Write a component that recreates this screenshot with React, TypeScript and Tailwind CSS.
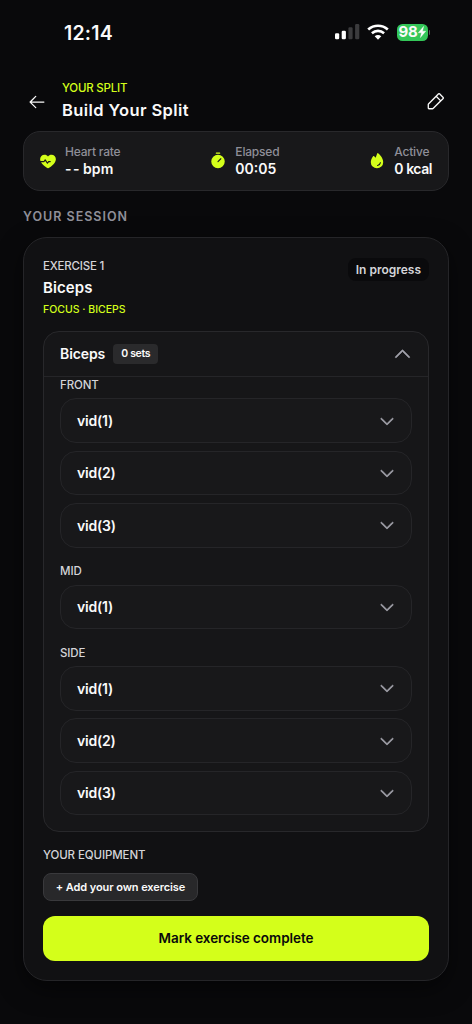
import {
  PiArrowLeft,
  PiCaretDown,
  PiCaretUp,
  PiFireFill,
  PiHeartbeatFill,
  PiPencilSimple,
  PiTimerFill,
} from "react-icons/pi"
import type { IconType } from "react-icons"

interface Stat {
  label: string
  dashes?: string
  value: string
  icon: IconType
  valueClass: string
}

interface Group {
  name: string
  videos: string[]
}

const stats: Stat[] = [
  { label: "Heart rate", dashes: "--", value: "bpm", icon: PiHeartbeatFill, valueClass: "tracking-[0.1px]" },
  { label: "Elapsed", value: "00:05", icon: PiTimerFill, valueClass: "" },
  { label: "Active", value: "0 kcal", icon: PiFireFill, valueClass: "tracking-[-0.45px]" },
]

const groups: Group[] = [
  { name: "FRONT", videos: ["vid(1)", "vid(2)", "vid(3)"] },
  { name: "MID", videos: ["vid(1)"] },
  { name: "SIDE", videos: ["vid(1)", "vid(2)", "vid(3)"] },
]

function StatusBar() {
  return (
    <div className="flex h-[64px] items-center justify-between pl-[64px] pr-[42px]">
      <span className="mt-[1px] text-[19.5px] leading-6 font-semibold tracking-[0.2px]">12:14</span>
      <div className="flex items-center">
        <svg width="25" height="16" viewBox="0 0 25 16">
          <rect x="0" y="9.2" width="4.2" height="6" rx="1.2" fill="#fff" />
          <rect x="6.7" y="6.7" width="4.2" height="8.5" rx="1.2" fill="#fff" />
          <rect x="13.4" y="3.3" width="4.2" height="11.9" rx="1.2" fill="#3b3b3d" />
          <rect x="20.1" y="0" width="4.2" height="15.2" rx="1.2" fill="#3b3b3d" />
        </svg>
        <svg className="ml-[7px]" width="22" height="16" viewBox="0 0 22 16">
          <path d="M1.2 5.5C6.8.5 15.2.5 20.8 5.5" fill="none" stroke="#fff" strokeWidth="2.7" />
          <path d="M4.9 9.3c3.6-3.2 8.6-3.2 12.2 0" fill="none" stroke="#fff" strokeWidth="2.6" />
          <path d="M11 15.7 7.7 12.2c1.9-1.6 4.7-1.6 6.6 0z" fill="#fff" />
        </svg>
        <div className="ml-[8px] flex h-[17px] w-[31px] items-center justify-center rounded-[5.5px] bg-[#34c759]">
          <span className="text-[15px] leading-4 font-bold tracking-[-0.2px]">98</span>
          <svg className="shrink-0" width="8" height="12" viewBox="0 0 8 12">
            <path d="M5.6.4.3 6.8h3.2L2.4 11.6 7.7 5.2H4.5z" fill="#fff" stroke="#fff" strokeWidth="0.4" />
          </svg>
        </div>
        <div className="ml-[1px] h-[5px] w-[1.5px] rounded-r bg-[#55555a]" />
      </div>
    </div>
  )
}

function Header() {
  return (
    <div className="flex items-center justify-between pt-[14px] pr-[26px] pl-[27px]">
      <div className="flex items-center">
        <PiArrowLeft className="mt-[3px] size-5" />
        <div className="ml-[15px]">
          <p className="text-[11.5px] leading-5 font-medium tracking-[-0.22px] text-[#d4ff1a]">YOUR SPLIT</p>
          <h1 className="text-[16.5px] leading-6 font-semibold tracking-[0.4px]">Build Your Split</h1>
        </div>
      </div>
      <PiPencilSimple className="mt-[3px] size-[21px]" />
    </div>
  )
}

function VideoRow({ name }: { name: string }) {
  return (
    <button className="flex h-[44.6px] w-full items-center justify-between rounded-[16px] border border-[#252528] bg-[#18181a] pr-[15px] pl-4">
      <span className="mt-[1px] text-[14px] leading-5 font-semibold tracking-[-0.2px]">{name}</span>
      <PiCaretDown className="size-[18px] text-[#a1a1aa]" strokeWidth={10} />
    </button>
  )
}

export default function App() {
  return (
    <div className="h-[1024px] w-[472px] overflow-hidden bg-[#09090b] font-['Inter',sans-serif] text-[#fafafa]">
      <StatusBar />
      <Header />

      <div className="mx-[23px] mt-[9px] flex h-[60px] items-center justify-between rounded-[17px] border border-[#28282b] bg-[#18181a] pr-4 pl-[15px]">
        {stats.map((s) => (
          <div key={s.label} className="flex items-center gap-2">
            <s.icon className="size-[18px] text-[#d4ff1a]" />
            <div className="-mt-[1px]">
              <p className="text-[12px] leading-[17px] font-medium tracking-[-0.2px] text-[#8f8f98]">{s.label}</p>
              <p className={`text-[14px] leading-[18px] font-semibold ${s.valueClass}`}>
                {s.dashes && <span className="mr-[2px] tracking-[1.5px]">{s.dashes}</span>}
                {s.value}
              </p>
            </div>
          </div>
        ))}
      </div>

      <h2 className="mt-4 ml-[23px] text-[12.5px] leading-5 font-semibold tracking-[1px] text-[#8f8f98]">YOUR SESSION</h2>

      <div className="mx-[23px] mt-[10px] h-[744px] rounded-[24px] border border-[#252528] bg-[#111113] px-[19px] pt-[18px] shadow-[0_8px_24px_rgba(0,0,0,0.5)]">
        <div className="flex items-start justify-between">
          <div>
            <p className="text-[11.5px] leading-5 font-medium tracking-[-0.2px] text-[#d4d4d8]">EXERCISE 1</p>
            <h3 className="text-[15px] leading-6 font-semibold tracking-[0.1px]">Biceps</h3>
            <p className="text-[10.5px] leading-5 font-medium text-[#d4ff1a]">FOCUS · BICEPS</p>
          </div>
          <span className="mt-[2px] flex h-[23px] items-center rounded-[8px] bg-[#0a0a0c] px-2 text-[12px] font-semibold text-[#d4d4d8]">
            In progress
          </span>
        </div>

        <div className="mt-[11px] h-[501px] rounded-[16px] border border-[#28282b] bg-[#161618]">
          <div className="flex h-[45px] items-center justify-between border-b border-[#252528] pr-[15px] pl-4">
            <div className="flex items-center gap-2">
              <span className="text-[14px] leading-5 font-semibold tracking-[-0.1px]">Biceps</span>
              <span className="flex h-5 items-center rounded-[4px] bg-[#2a2a2c] px-2 text-[10.5px] font-semibold tracking-[-0.3px]">0 sets</span>
            </div>
            <PiCaretUp className="size-[21px] text-[#a1a1aa]" strokeWidth={8} />
          </div>
          <div className="flex flex-col gap-[15.6px] px-4">
            {groups.map((g) => (
              <div key={g.name}>
                <p className="mb-[5.4px] text-[11.5px] leading-4 font-medium tracking-[-0.1px] text-[#d4d4d8]">{g.name}</p>
                <div className="flex flex-col gap-[7.7px]">
                  {g.videos.map((v) => (
                    <VideoRow key={v} name={v} />
                  ))}
                </div>
              </div>
            ))}
          </div>
        </div>

        <p className="mt-[13px] text-[11.5px] leading-5 font-medium tracking-[-0.1px] text-[#d4d4d8]">YOUR EQUIPMENT</p>
        <button className="mt-2 flex h-[28px] w-[155px] items-center justify-center rounded-[8px] border border-[#39393c] bg-[#28282a] text-[11px] font-semibold tracking-[-0.08px]">
          + Add your own exercise
        </button>
        <button className="mt-[15px] flex h-[45px] w-full items-center justify-center rounded-[12px] bg-[#d4ff1a] text-[13.5px] font-semibold tracking-[-0.05px] text-[#09090b]">
          Mark exercise complete
        </button>
      </div>
    </div>
  )
}
